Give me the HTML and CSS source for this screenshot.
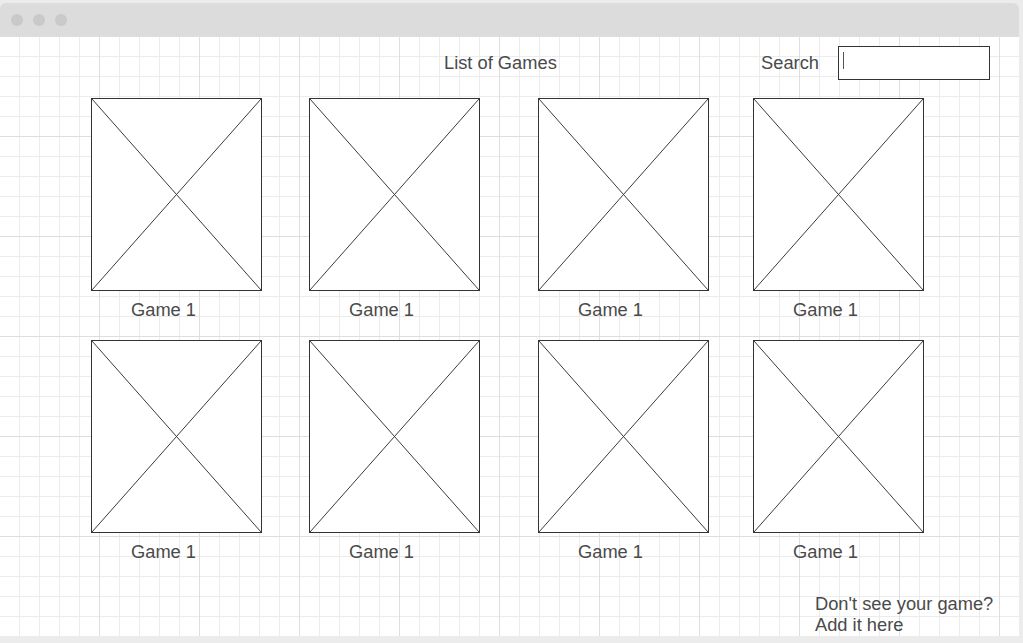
FILE: index.html
```html
<!DOCTYPE html>
<html lang="en">
<head>
  <meta charset="UTF-8" />
  <meta name="viewport" content="width=device-width, initial-scale=1.0" />
  <title>List of Games</title>
  <link rel="stylesheet" href="styles.css">
</head>
<body>
  <div class="window">
    <div class="titlebar">
      <span class="dot"></span>
      <span class="dot"></span>
      <span class="dot"></span>
    </div>

    <div class="content">
      <header class="top">
        <h1>List of Games</h1>
        <div class="search">
          <label>Search</label>
          <div class="search-box"><span class="caret"></span></div>
        </div>
      </header>

      <section class="games">
        <div class="game">
          <div class="thumb"><svg viewBox="0 0 100 100" preserveAspectRatio="none"><line x1="0" y1="0" x2="100" y2="100" vector-effect="non-scaling-stroke"/><line x1="100" y1="0" x2="0" y2="100" vector-effect="non-scaling-stroke"/></svg></div>
          <p class="name">Game 1</p>
        </div>
        <div class="game">
          <div class="thumb"><svg viewBox="0 0 100 100" preserveAspectRatio="none"><line x1="0" y1="0" x2="100" y2="100" vector-effect="non-scaling-stroke"/><line x1="100" y1="0" x2="0" y2="100" vector-effect="non-scaling-stroke"/></svg></div>
          <p class="name">Game 1</p>
        </div>
        <div class="game">
          <div class="thumb"><svg viewBox="0 0 100 100" preserveAspectRatio="none"><line x1="0" y1="0" x2="100" y2="100" vector-effect="non-scaling-stroke"/><line x1="100" y1="0" x2="0" y2="100" vector-effect="non-scaling-stroke"/></svg></div>
          <p class="name">Game 1</p>
        </div>
        <div class="game">
          <div class="thumb"><svg viewBox="0 0 100 100" preserveAspectRatio="none"><line x1="0" y1="0" x2="100" y2="100" vector-effect="non-scaling-stroke"/><line x1="100" y1="0" x2="0" y2="100" vector-effect="non-scaling-stroke"/></svg></div>
          <p class="name">Game 1</p>
        </div>
        <div class="game">
          <div class="thumb"><svg viewBox="0 0 100 100" preserveAspectRatio="none"><line x1="0" y1="0" x2="100" y2="100" vector-effect="non-scaling-stroke"/><line x1="100" y1="0" x2="0" y2="100" vector-effect="non-scaling-stroke"/></svg></div>
          <p class="name">Game 1</p>
        </div>
        <div class="game">
          <div class="thumb"><svg viewBox="0 0 100 100" preserveAspectRatio="none"><line x1="0" y1="0" x2="100" y2="100" vector-effect="non-scaling-stroke"/><line x1="100" y1="0" x2="0" y2="100" vector-effect="non-scaling-stroke"/></svg></div>
          <p class="name">Game 1</p>
        </div>
        <div class="game">
          <div class="thumb"><svg viewBox="0 0 100 100" preserveAspectRatio="none"><line x1="0" y1="0" x2="100" y2="100" vector-effect="non-scaling-stroke"/><line x1="100" y1="0" x2="0" y2="100" vector-effect="non-scaling-stroke"/></svg></div>
          <p class="name">Game 1</p>
        </div>
        <div class="game">
          <div class="thumb"><svg viewBox="0 0 100 100" preserveAspectRatio="none"><line x1="0" y1="0" x2="100" y2="100" vector-effect="non-scaling-stroke"/><line x1="100" y1="0" x2="0" y2="100" vector-effect="non-scaling-stroke"/></svg></div>
          <p class="name">Game 1</p>
        </div>
      </section>

      <p class="add">Don't see your game?<br>Add it here</p>
    </div>
  </div>
</body>
</html>
```

FILE: styles.css
```css
body {
  margin: 0;
  padding: 0;
  background-color: #ececec;
  font-family: 'Liberation Sans', Arial, sans-serif;
  color: #4a4a4a;
  overflow: hidden;
}

.window {
  width: 1019px;
  height: 633px;
  margin-top: 3px;
  display: flex;
  flex-direction: column;
}

.titlebar {
  height: 33px;
  background-color: #dcdcdc;
  border-radius: 6px 6px 0 0;
  display: flex;
  align-items: center;
  gap: 10px;
  padding-left: 11px;
  flex-shrink: 0;
}

.dot {
  width: 12px;
  height: 12px;
  border-radius: 50%;
  background-color: #c9c9c9;
}

.content {
  flex: 1;
  background-color: #fff;
  background-image:
    linear-gradient(to right, transparent 99px, #dedede 99px, #dedede 100px),
    linear-gradient(to bottom, #dedede 0, #dedede 1px, transparent 1px),
    linear-gradient(to right, transparent 19px, #ececec 19px, #ececec 20px),
    linear-gradient(to bottom, #ececec 0, #ececec 1px, transparent 1px);
  background-size: 100px 100px, 100px 100px, 20px 20px, 20px 20px;
}

.top {
  display: flex;
  align-items: center;
  height: 62px;
  box-sizing: border-box;
  padding: 10px 29px 18px 444px;
}

.top h1 {
  margin: 0;
  font-size: 18.3px;
  font-weight: normal;
}

.search {
  margin-left: auto;
  display: flex;
  align-items: center;
  gap: 19px;
  font-size: 18.3px;
}

.search-box {
  width: 152px;
  height: 34px;
  box-sizing: border-box;
  border: 1px solid #333;
  background-color: #fff;
  padding: 5px 0 0 4px;
}

.caret {
  display: block;
  width: 1px;
  height: 17px;
  background-color: #555;
}

.games {
  display: grid;
  grid-template-columns: 218px 229px 215px 171px;
  row-gap: 20px;
  padding-left: 91px;
}

.thumb {
  width: 171px;
  height: 193px;
  box-sizing: border-box;
  border: 1px solid #333;
  background-color: #fff;
}

.thumb svg {
  display: block;
  width: 100%;
  height: 100%;
}

.thumb line {
  stroke: #3a3a3a;
  stroke-width: 1;
}

.name {
  margin: 8px 0 0 40px;
  font-size: 18.3px;
  line-height: 21px;
}

.add {
  margin: 31px 0 0 815px;
  font-size: 18.3px;
  line-height: 21px;
}
```
